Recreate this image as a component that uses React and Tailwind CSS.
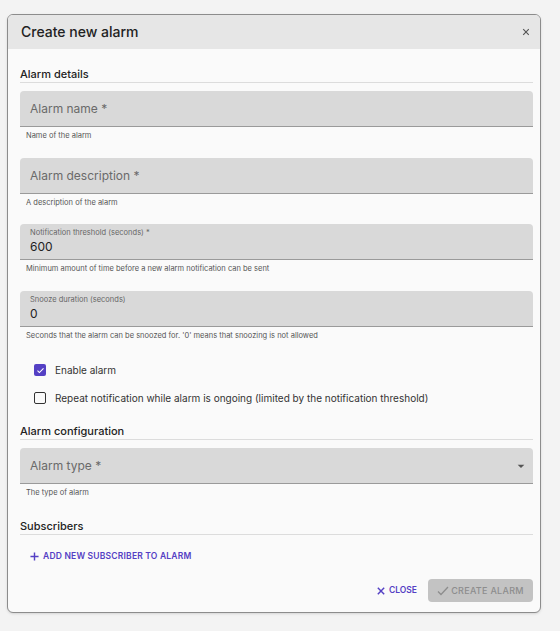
import React from 'react';

const font = { fontFamily: 'Inter, "Noto Sans", sans-serif' };

const SectionTitle = ({ children, className = '' }) => (
    <div className={`border-b border-[#dcdcdc] text-[11px] leading-[16px] font-medium text-[#222] ${className}`}>
        {children}
    </div>
);

const Helper = ({ children }) => (
    <div className="mt-[4px] pl-[6px] text-[7.5px] leading-[10px] text-[#555]">{children}</div>
);

const EmptyField = ({ label, select }) => (
    <div className={`h-[36px] bg-[#d9d9d9] rounded-t-[4px] border-b border-[#9a9a9a] flex items-center pl-[10px] ${select ? 'pr-[4px]' : 'pr-[10px]'}`}>
        <span className="text-[12px] text-[#6a6a6a] flex-1">{label}</span>
        {select && (
            <svg width="16" height="16" viewBox="0 0 24 24">
                <path d="M7 10l5 5 5-5z" fill="#555" />
            </svg>
        )}
    </div>
);

const FilledField = ({ label, value }) => (
    <div className="h-[36px] bg-[#d9d9d9] rounded-t-[4px] border-b border-[#9a9a9a] flex flex-col justify-center px-[10px]">
        <span className="text-[7.5px] leading-[10px] text-[#666]">{label}</span>
        <span className="text-[12px] leading-[16px] text-[#222] mt-[1px]">{value}</span>
    </div>
);

const Check = ({ checked, label, className = '' }) => (
    <div className={`flex items-center h-[20px] pl-[14px] ${className}`}>
        {checked ? (
            <span className="w-[12px] h-[12px] rounded-[2px] bg-[#5440c4] flex items-center justify-center">
                <svg width="9" height="9" viewBox="0 0 24 24">
                    <path d="M4 12.5l5 5L20 6.5" stroke="#fff" strokeWidth="3" fill="none" />
                </svg>
            </span>
        ) : (
            <span className="w-[12px] h-[12px] rounded-[2px] border-[1.5px] border-[#333] box-border" />
        )}
        <span className="ml-[9px] text-[10px] text-[#333]">{label}</span>
    </div>
);

export default function App() {
    return (
        <div className="min-h-screen bg-[#f3f3f3] pt-[14px] pl-[7px]" style={font}>
            <div className="w-[534px] h-[599px] bg-[#fafafa] border border-[#8c8c8c] rounded-[6px] overflow-hidden shadow-sm flex flex-col">
                <div className="h-[34px] bg-[#e6e6e6] flex items-center pl-[13px] pr-[10px] shrink-0">
                    <h1 className="flex-1 text-[14px] font-medium text-[#222] -mt-[2px]">Create new alarm</h1>
                    <svg width="8" height="8" viewBox="0 0 10 10">
                        <path d="M1.5 1.5l7 7M8.5 1.5l-7 7" stroke="#555" strokeWidth="1.4" />
                    </svg>
                </div>

                <div className="pl-[12px] pr-[7px] flex flex-col">
                    <SectionTitle className="mt-[17px]">Alarm details</SectionTitle>

                    <div className="mt-[8px]">
                        <EmptyField label="Alarm name *" />
                        <Helper>Name of the alarm</Helper>
                    </div>
                    <div className="mt-[17px]">
                        <EmptyField label="Alarm description *" />
                        <Helper>A description of the alarm</Helper>
                    </div>
                    <div className="mt-[16px]">
                        <FilledField label="Notification threshold (seconds) *" value="600" />
                        <Helper>Minimum amount of time before a new alarm notification can be sent</Helper>
                    </div>
                    <div className="mt-[17px]">
                        <FilledField label="Snooze duration (seconds)" value="0" />
                        <Helper>Seconds that the alarm can be snoozed for. '0' means that snoozing is not allowed</Helper>
                    </div>

                    <Check checked label="Enable alarm" className="mt-[19px]" />
                    <Check label="Repeat notification while alarm is ongoing (limited by the notification threshold)" className="mt-[8px]" />

                    <SectionTitle className="mt-[15px]">Alarm configuration</SectionTitle>
                    <div className="mt-[8px]">
                        <EmptyField label="Alarm type *" select />
                        <Helper>The type of alarm</Helper>
                    </div>

                    <SectionTitle className="mt-[20px]">Subscribers</SectionTitle>
                    <button className="mt-[11px] h-[20px] self-start flex items-center pl-[10px] text-[#5440c4] text-[8.5px] font-semibold uppercase tracking-[0.2px]">
                        <svg width="9" height="9" viewBox="0 0 10 10" className="mr-[4px]">
                            <path d="M5 0.5v9M0.5 5h9" stroke="#5440c4" strokeWidth="1.6" />
                        </svg>
                        Add new subscriber to alarm
                    </button>

                    <div className="mt-[13px] flex justify-end items-center gap-[11px]">
                        <button className="flex items-center text-[#5440c4] text-[8.5px] font-semibold uppercase">
                            <svg width="8" height="8" viewBox="0 0 10 10" className="mr-[4px]">
                                <path d="M1 1l8 8M9 1l-8 8" stroke="#5440c4" strokeWidth="1.8" />
                            </svg>
                            Close
                        </button>
                        <button disabled className="w-[105px] h-[23px] rounded-[4px] bg-[#c3c3c3] flex items-center justify-center text-[#8d8d8d] text-[9px] font-medium uppercase tracking-[0.3px]">
                            <svg width="12" height="10" viewBox="0 0 12 10" className="mr-[2px]">
                                <path d="M1 5.5l3 3 7-7.5" stroke="#8d8d8d" strokeWidth="1.3" fill="none" />
                            </svg>
                            Create alarm
                        </button>
                    </div>
                </div>
            </div>
        </div>
    );
}
